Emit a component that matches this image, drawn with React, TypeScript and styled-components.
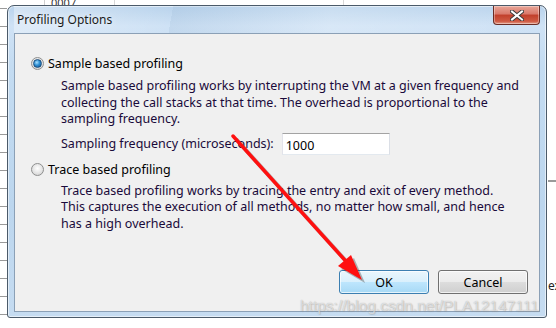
import styled, { createGlobalStyle } from 'styled-components';

const GlobalStyle = createGlobalStyle`
  html, body {
    margin: 0;
    padding: 0;
    background: #ffffff;
    overflow: hidden;
  }
  * {
    box-sizing: border-box;
  }
`;

const Desktop = styled.div`
  position: relative;
  width: 556px;
  height: 328px;
  overflow: hidden;
  background: #ffffff;
  font-family: 'Noto Sans', 'Liberation Sans', sans-serif;
`;

const BackStrip = styled.div`
  position: absolute;
  left: 0;
  top: 0;
  width: 7px;
  height: 328px;
  background: repeating-linear-gradient(
    to bottom,
    #ffffff 0px,
    #ffffff 8px,
    #9a9a9a 8px,
    #9a9a9a 9px,
    #ffffff 9px,
    #ffffff 18px
  );
`;

const BackTable = styled.div`
  position: absolute;
  left: 44px;
  top: 0;
  width: 520px;
  height: 5px;
  border-left: 1px solid #d0d0d0;
  display: flex;
  font-size: 11px;
  color: #333;
  line-height: 5px;
  overflow: hidden;
`;

const BackCell = styled.div<{ $w: number }>`
  width: ${p => p.$w}px;
  border-right: 1px solid #d8d8d8;
  padding-left: 6px;
`;

const Window = styled.div`
  position: absolute;
  left: 7px;
  top: 5px;
  width: 540px;
  height: 313px;
  display: flex;
  flex-direction: column;
  padding: 0 6px 5px 6px;
  border: 1px solid #4b5a69;
  border-radius: 7px 7px 3px 3px;
  background: linear-gradient(
    to bottom,
    #b9d3ec 0px,
    #cfe2f5 20px,
    #c4dcf2 60px,
    #bcd6ee 200px,
    #c6dcf1 313px
  );
  box-shadow: inset 0 0 0 1px rgba(255, 255, 255, 0.55);
`;

const TitleBar = styled.div`
  height: 27px;
  display: flex;
  align-items: flex-start;
  justify-content: space-between;
  background: linear-gradient(
    100deg,
    rgba(255, 255, 255, 0.35) 0%,
    rgba(255, 255, 255, 0) 30%,
    rgba(150, 180, 210, 0.2) 24%,
    rgba(255, 255, 255, 0.2) 60%,
    rgba(255, 255, 255, 0) 100%
  );
`;

const Title = styled.div`
  padding: 6px 0 0 3px;
  font-size: 12px;
  color: #1b1b1b;
  line-height: 16px;
  text-shadow: 0 0 6px rgba(255, 255, 255, 0.9);
`;

const CloseButton = styled.div`
  width: 47px;
  height: 19px;
  display: flex;
  align-items: center;
  justify-content: center;
  border: 1px solid #6b2c24;
  border-top: none;
  border-radius: 0 0 4px 4px;
  background: linear-gradient(
    to bottom,
    #e8a597 0%,
    #d9786a 45%,
    #c13f2b 50%,
    #cf5a43 85%,
    #e5a08d 100%
  );
  box-shadow: inset 0 0 0 1px rgba(255, 255, 255, 0.35);
`;

const Client = styled.div`
  flex: 1;
  display: flex;
  flex-direction: column;
  background: #f0f0f0;
  border: 1px solid #8ba0b6;
  padding: 21px 11px 17px 16px;
`;

const OptionRow = styled.label<{ $top?: number }>`
  display: flex;
  align-items: center;
  gap: 4px;
  height: 17px;
  margin-top: ${p => p.$top ?? 0}px;
  font-size: 12.5px;
  color: #000;
`;

const RadioMark = styled.span<{ $checked: boolean }>`
  width: 13px;
  height: 13px;
  border-radius: 50%;
  border: 1px solid #8e8f8f;
  background: radial-gradient(circle at 50% 40%, #ffffff 0%, #e4e4e4 55%, #c8c8c8 100%);
  display: flex;
  align-items: center;
  justify-content: center;
  flex-shrink: 0;
  &::after {
    content: '';
    width: 7px;
    height: 7px;
    border-radius: 50%;
    display: ${p => (p.$checked ? 'block' : 'none')};
    background: radial-gradient(circle at 40% 35%, #a8e0ff 0%, #2e8fd3 45%, #0d4f8c 100%);
    border: 1px solid #1d4f7e;
  }
`;

const Description = styled.div<{ $top: number }>`
  margin: ${p => p.$top}px 0 0 30px;
  font-size: 12.5px;
  line-height: 16.6px;
  color: #1a0a3a;
  white-space: nowrap;
`;

const FrequencyRow = styled.div`
  display: flex;
  align-items: center;
  gap: 8px;
  margin: 5px 0 0 30px;
  font-size: 12.5px;
  color: #1a0a3a;
`;

const NumberInput = styled.div`
  width: 108px;
  height: 22px;
  background: #ffffff;
  border: 1px solid #abadb3;
  border-top-color: #a3a3a3;
  border-left-color: #e2e3ea;
  border-right-color: #dbdfe6;
  border-bottom-color: #e3e9ef;
  padding: 3px 0 0 3px;
  font-size: 12.5px;
  color: #000;
`;

const Spacer = styled.div`
  flex: 1;
`;

const ButtonRow = styled.div`
  display: flex;
  justify-content: flex-end;
  gap: 9px;
`;

const Button = styled.div<{ $primary?: boolean }>`
  width: 90px;
  height: 24px;
  display: flex;
  align-items: center;
  justify-content: center;
  font-size: 12.5px;
  color: #000;
  border-radius: 3px;
  border: 1px solid ${p => (p.$primary ? '#3c7fb1' : '#707070')};
  background: ${p =>
    p.$primary
      ? 'linear-gradient(to bottom, #eaf6fd 0%, #d9f0fc 50%, #bee6fd 50%, #a7d9f5 100%)'
      : 'linear-gradient(to bottom, #f2f2f2 0%, #ebebeb 50%, #dddddd 50%, #cfcfcf 100%)'};
  box-shadow: inset 0 0 0 1px rgba(255, 255, 255, 0.7);
`;

const Annotation = styled.svg`
  position: absolute;
  left: 0;
  top: 0;
  pointer-events: none;
`;

const Watermark = styled.div`
  position: absolute;
  left: 300px;
  top: 297px;
  font-family: 'Liberation Sans', Arial, sans-serif;
  font-size: 15.5px;
  color: rgba(255, 255, 255, 0.55);
  text-shadow: 0 0 1px rgba(120, 120, 120, 0.55), 1px 1px 1px rgba(150, 150, 150, 0.35);
  white-space: nowrap;
`;

const RightEdge = styled.div`
  position: absolute;
  left: 548px;
  top: 180px;
  width: 8px;
  height: 148px;
  border-top: 2px solid #9a9a9a;
  font-size: 12px;
  color: #222;
  padding-top: 95px;
  overflow: hidden;
`;

export default function App() {
  return (
    <>
      <GlobalStyle />
      <Desktop>
        <BackStrip />
        <BackTable>
          <BackCell $w={70}>0007</BackCell>
          <BackCell $w={230} />
          <BackCell $w={220} />
        </BackTable>
        <RightEdge>ex</RightEdge>
        <Window>
          <TitleBar>
            <Title>Profiling Options</Title>
            <CloseButton>
              <svg width="14" height="11" viewBox="0 0 14 11">
                <path d="M2 1.5 L12 9.5 M12 1.5 L2 9.5" stroke="#3b3b3b" strokeWidth="4" strokeLinecap="square" />
                <path d="M2 1.5 L12 9.5 M12 1.5 L2 9.5" stroke="#ffffff" strokeWidth="2" strokeLinecap="square" />
              </svg>
            </CloseButton>
          </TitleBar>
          <Client>
            <OptionRow>
              <RadioMark $checked />
              Sample based profiling
            </OptionRow>
            <Description $top={6}>
              Sample based profiling works by interrupting the VM at a given frequency and
              <br />
              collecting the call stacks at that time. The overhead is proportional to the
              <br />
              sampling frequency.
            </Description>
            <FrequencyRow>
              Sampling frequency (microseconds):
              <NumberInput>1000</NumberInput>
            </FrequencyRow>
            <OptionRow $top={6}>
              <RadioMark $checked={false} />
              Trace based profiling
            </OptionRow>
            <Description $top={5}>
              Trace based profiling works by tracing the entry and exit of every method.
              <br />
              This captures the execution of all methods, no matter how small, and hence
              <br />
              has a high overhead.
            </Description>
            <Spacer />
            <ButtonRow>
              <Button $primary>OK</Button>
              <Button>Cancel</Button>
            </ButtonRow>
          </Client>
        </Window>
        <Watermark>https://blog.csdn.net/PLA12147111</Watermark>
        <Annotation width="556" height="328" viewBox="0 0 556 328">
          <g opacity="0.35" transform="translate(3 3)">
            <path d="M233 136 L352 268" stroke="#333" strokeWidth="4" fill="none" />
            <path d="M362 280 L338 266 L351 255 Z" fill="#333" />
          </g>
          <path d="M233 136 L352 268" stroke="#ff1010" strokeWidth="3.5" fill="none" strokeLinecap="round" />
          <path d="M362 280 L338 266 L351 255 Z" fill="#ff1010" />
        </Annotation>
      </Desktop>
    </>
  );
}
